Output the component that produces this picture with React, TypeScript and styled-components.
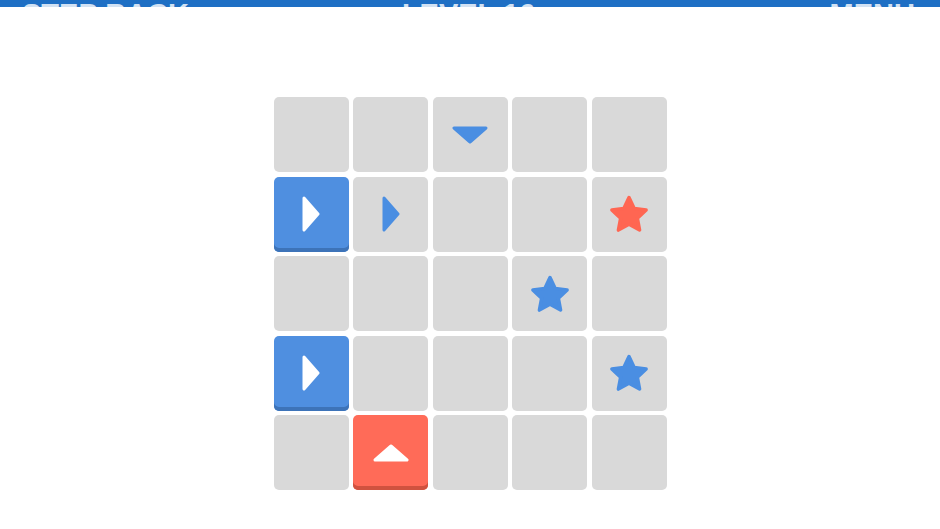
import styled, { createGlobalStyle } from 'styled-components';

const GlobalStyle = createGlobalStyle`
    body {
        margin: 0;
        background: #ffffff;
        font-family: "Liberation Sans", Arial, sans-serif;
    }
`;

const Page = styled.div`
    width: 940px;
    height: 529px;
    overflow: hidden;
    display: flex;
    flex-direction: column;
    align-items: center;
`;

const TopBar = styled.div`
    align-self: stretch;
    height: 4px;
    background: #1e6fc4;
    overflow: hidden;
    display: grid;
    grid-template-columns: 1fr auto 1fr;
    align-items: end;
    padding: 0 25px 3px 22px;
    color: #ffffff;
    font-size: 29px;
    font-weight: bold;
    line-height: 28px;
`;

const BarItem = styled.span<{ $align: 'left' | 'center' | 'right' }>`
    text-align: ${p => p.$align};
    white-space: nowrap;
    opacity: 0.8;
`;

const Board = styled.div`
    margin-top: 90px;
    display: grid;
    grid-template-columns: repeat(5, 75px);
    grid-auto-rows: 75px;
    gap: 4.5px;
`;

type Kind = 'empty' | 'blue' | 'red';

const palette: Record<Kind, { bg: string; edge: string }> = {
    empty: { bg: '#d9d9d9', edge: '#d9d9d9' },
    blue: { bg: '#4f8fe0', edge: '#3d73b8' },
    red: { bg: '#ff6b58', edge: '#d0523f' },
};

const Tile = styled.div<{ $kind: Kind }>`
    border-radius: 5px;
    background: ${p => palette[p.$kind].bg};
    box-shadow: ${p => (p.$kind === 'empty' ? 'none' : `inset 0 -4px 0 ${palette[p.$kind].edge}`)};
    display: flex;
    align-items: center;
    justify-content: center;
`;

type Dir = 'right' | 'down' | 'up';

const arrowPoints: Record<Dir, string> = {
    right: '2,2 16,18 2,34',
    down: '2,2 34,2 18,16',
    up: '2,16 18,2 34,16',
};

const arrowSize: Record<Dir, [number, number]> = {
    right: [18, 36],
    down: [36, 18],
    up: [36, 18],
};

function Arrow({ dir, color }: { dir: Dir; color: string }) {
    const [w, h] = arrowSize[dir];
    return (
        <svg width={w} height={h} viewBox={`0 0 ${w} ${h}`}>
            <polygon points={arrowPoints[dir]} fill={color} stroke={color} strokeWidth={3} strokeLinejoin="round" />
        </svg>
    );
}

function starPoints(cx: number, cy: number, R: number, r: number) {
    const pts: string[] = [];
    for (let i = 0; i < 10; i++) {
        const rad = i % 2 === 0 ? R : r;
        const a = -Math.PI / 2 + (i * Math.PI) / 5;
        pts.push(`${(cx + rad * Math.cos(a)).toFixed(2)},${(cy + rad * Math.sin(a)).toFixed(2)}`);
    }
    return pts.join(' ');
}

function Star({ color }: { color: string }) {
    return (
        <svg width={40} height={40} viewBox="0 0 40 40">
            <polygon
                points={starPoints(20, 21.5, 18, 8.8)}
                fill={color}
                stroke={color}
                strokeWidth={3.5}
                strokeLinejoin="round"
            />
        </svg>
    );
}

type Cell = { kind: Kind; content?: 'star-blue' | 'star-red' | { dir: Dir; color: string } };

const B = '#4a8ee2';
const R = '#ff6652';

const cells: Cell[] = [
    { kind: 'empty' }, { kind: 'empty' }, { kind: 'empty', content: { dir: 'down', color: B } }, { kind: 'empty' }, { kind: 'empty' },
    { kind: 'blue', content: { dir: 'right', color: '#fff' } }, { kind: 'empty', content: { dir: 'right', color: B } }, { kind: 'empty' }, { kind: 'empty' }, { kind: 'empty', content: 'star-red' },
    { kind: 'empty' }, { kind: 'empty' }, { kind: 'empty' }, { kind: 'empty', content: 'star-blue' }, { kind: 'empty' },
    { kind: 'blue', content: { dir: 'right', color: '#fff' } }, { kind: 'empty' }, { kind: 'empty' }, { kind: 'empty' }, { kind: 'empty', content: 'star-blue' },
    { kind: 'empty' }, { kind: 'red', content: { dir: 'up', color: '#fff' } }, { kind: 'empty' }, { kind: 'empty' }, { kind: 'empty' },
];

export default function App() {
    return (
        <>
            <GlobalStyle />
            <Page>
                <TopBar>
                    <BarItem $align="left">STEP BACK</BarItem>
                    <BarItem $align="center">LEVEL 16</BarItem>
                    <BarItem $align="right">MENU</BarItem>
                </TopBar>
                <Board>
                    {cells.map((c, i) => (
                        <Tile key={i} $kind={c.kind}>
                            {c.content === 'star-blue' && <Star color={B} />}
                            {c.content === 'star-red' && <Star color={R} />}
                            {c.content && typeof c.content === 'object' && <Arrow dir={c.content.dir} color={c.content.color} />}
                        </Tile>
                    ))}
                </Board>
            </Page>
        </>
    );
}
